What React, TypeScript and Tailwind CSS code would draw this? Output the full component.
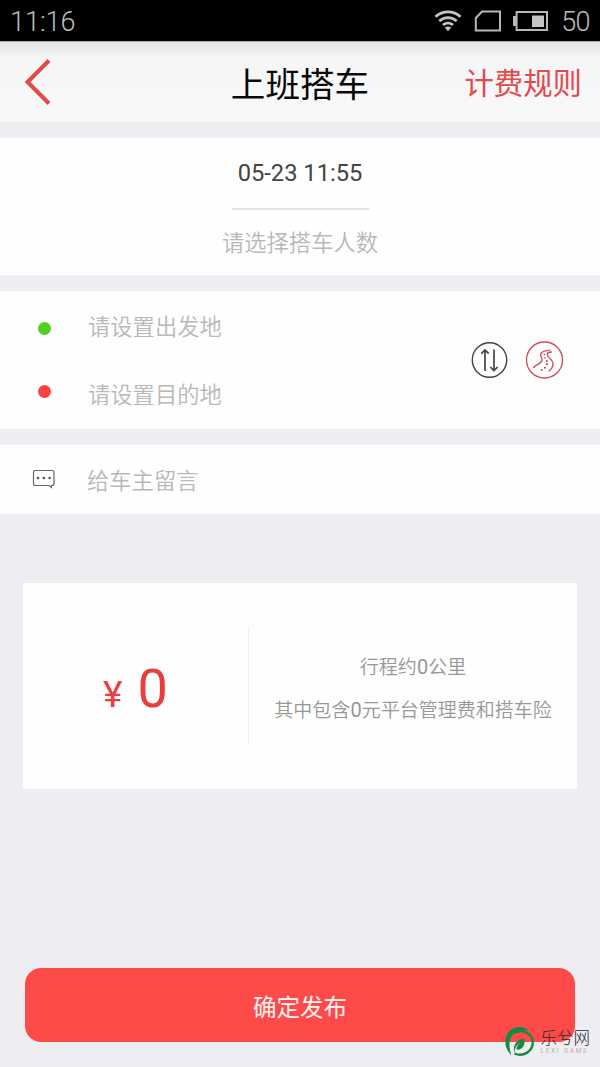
const zh = "font-['Roboto','Noto_Sans_CJK_SC',sans-serif]";

function StatusBar() {
  return (
    <div className="flex h-[41px] items-center justify-between bg-black pl-[10px] pr-[10px] text-[27px] font-light leading-none text-[#bdbdbd]">
      <span className="pt-[4px]">11:16</span>
      <div className="flex items-center">
        <svg width="28" height="24" viewBox="0 0 28 24" fill="none" stroke="#c4c4c4" strokeWidth="2.8" className="mr-[12px]">
          <path d="M1.5 7.8C8.5 1.2 19.5 1.2 26.5 7.8" />
          <path d="M5.3 12C10.3 7.4 17.7 7.4 22.7 12" />
          <path d="M9 16C12 13.4 16 13.4 19 16" />
          <path d="M10.7 18.6Q14 16.2 17.3 18.6L14 22.2Z" fill="#c4c4c4" stroke="none" />
        </svg>
        <svg width="28" height="24" viewBox="0 0 28 24" fill="none" stroke="#b8b8b8" strokeWidth="2" className="mr-[11px]">
          <path d="M8 2.500H26V21.500H1.800V9Z" />
        </svg>
        <svg width="36" height="24" viewBox="0 0 36 24" fill="none" className="mr-[12px]">
          <rect x="3.6" y="3" width="30.4" height="18" stroke="#b8b8b8" strokeWidth="2" />
          <rect x="0" y="7" width="3" height="10" fill="#b8b8b8" />
          <rect x="19" y="6.5" width="12" height="11.5" fill="#c4c4c4" />
        </svg>
        <span className="pt-[4px] text-[27px] tracking-[-0.6px]">50</span>
      </div>
    </div>
  );
}

function Header() {
  return (
    <header className="grid h-[81px] grid-cols-[1fr_auto_1fr] items-center border-t border-[#a8a8a8] bg-linear-to-b from-[#e2e2e2] via-[#f6f6f6] via-20% to-[#f8f8f8] px-[18px]">
      <svg width="28" height="46" viewBox="0 0 28 46" fill="none" stroke="#e5484a" strokeWidth="4" className="ml-[6px]">
        <path d="M25 1.5L3.5 23L25 44.5" />
      </svg>
      <h1 className="pt-[7px] text-[34.6px] font-normal leading-none text-[#0a0a0a]">上班搭车</h1>
      <span className="justify-self-end pt-[6px] text-[29.4px] font-normal leading-none text-[#e5484d]">计费规则</span>
    </header>
  );
}

function Brand() {
  return (
    <div className="absolute bottom-[9px] right-[10px] flex items-center">
      <svg width="32" height="32" viewBox="0 0 32 32" fill="none">
        <path d="M7.500 29C-1.500 22 -0.500 7 9 2.500C16 -0.500 22 1.500 24.500 4.500C17.500 2.500 10 5.500 7 11.500C4.300 17.500 5.500 24 7.500 29Z" fill="#148a42" />
        <path d="M10.500 7C19 2 28.500 8 28.800 16C29 25 19.500 31.500 10.500 27.500" stroke="#148a42" strokeWidth="2.4" />
        <path d="M10.500 27.500C8.500 19 12 13.500 20.500 12.500C21.500 19.500 18 24.500 12.500 23.500C12.500 20.500 14 18 16.500 16.500C12.500 18.500 10.500 22 10.500 27.500Z" fill="#148a42" />
      </svg>
      <div className="ml-[5px] flex flex-col pb-[1px]">
        <span className="text-[16.5px] font-light leading-[19px] text-[#222832]">乐兮网</span>
        <span className="text-[6.500px] leading-[7px] tracking-[1.700px] text-[#b3b3b6]">LEXI GAME</span>
      </div>
    </div>
  );
}

export default function App() {
  return (
    <div className={`relative flex h-[1067px] w-[600px] flex-col overflow-hidden bg-[#eeedf2] ${zh}`}>
      <StatusBar />
      <Header />

      <section className="mt-[16px] flex h-[137px] flex-col items-center bg-[#fefefe]">
        <div className="mt-[22px] text-[23.7px] leading-[26px] text-[#444]">05-23 11:55</div>
        <div className="mt-[22px] h-[2px] w-[137px] bg-[#e3e3e3]" />
        <div className="mt-[20px] text-[22.3px] font-[350] leading-[26px] text-[#b8b8b8]">请选择搭车人数</div>
      </section>

      <section className="mt-[16px] flex h-[138px] items-center justify-between bg-[#fefefe] pr-[36px]">
        <div className="flex flex-col">
          <div className="flex h-[68px] items-center">
            <span className="ml-[38px] mt-[5px] size-[13px] rounded-full bg-[#51cf22]" />
            <span className="ml-[37px] mt-[2px] text-[22.3px] font-[350] leading-[26px] text-[#b8b8b8]">请设置出发地</span>
          </div>
          <div className="flex h-[68px] items-center">
            <span className="mb-[5px] ml-[38px] size-[13px] rounded-full bg-[#fb4242]" />
            <span className="ml-[37px] mt-[2px] text-[22.3px] font-[350] leading-[26px] text-[#b8b8b8]">请设置目的地</span>
          </div>
        </div>
        <div className="flex gap-[17px]">
          <svg width="38" height="38" viewBox="0 0 38 38" fill="none" stroke="#444" strokeWidth="1.4">
            <circle cx="18.500" cy="19" r="17.2" />
            <path d="M14 30V9.5M10.3 12.6L14 9L17.7 12.6" strokeWidth="1.7" />
            <path d="M23 8.5V29M19.3 26L23 29.6L26.7 26" strokeWidth="1.7" />
          </svg>
          <svg width="38" height="38" viewBox="0 0 38 38" fill="none" stroke="#d4485a" strokeWidth="1.3" strokeLinecap="round">
            <circle cx="18.500" cy="19" r="18" />
            <path d="M7.500 26.500C10.500 23 16.500 22.500 16 18.500C15.700 16.500 13.500 14 15.500 11.800C17.500 9.700 21 10 24 9" />
            <path d="M25.500 11C21.500 11 20.500 12.500 21.500 14.500C23 17.500 27.500 19 27 23.500C26.700 26.500 25 28.500 23 30" />
            <g fill="#98505b" stroke="none">
              <circle cx="18.300" cy="13.500" r="0.800" />
              <circle cx="19" cy="17" r="0.800" />
              <circle cx="20.800" cy="20" r="1" />
              <circle cx="20.900" cy="23.300" r="1.100" />
              <circle cx="19" cy="26.700" r="1" />
              <circle cx="15.700" cy="29" r="0.900" />
            </g>
          </svg>
        </div>
      </section>

      <section className="mt-[16px] flex h-[69px] items-center bg-[#fefefe]">
        <svg width="24" height="20" viewBox="0 0 24 20" fill="none" stroke="#666" strokeWidth="1.200" className="mb-[1px] ml-[32px]">
          <path d="M3.500 1.500H20Q22 1.500 22 3.500V14.500Q22 16.500 19.500 16.500V18.500L17 16.500H3.500Q1.500 16.500 1.500 14.500V3.500Q1.500 1.500 3.500 1.500Z" />
          <g fill="#555" stroke="none">
            <circle cx="6" cy="9" r="1.300" />
            <circle cx="11.800" cy="9" r="1.300" />
            <circle cx="17.600" cy="9" r="1.300" />
          </g>
        </svg>
        <span className="ml-[31px] pt-[3px] text-[22.3px] font-[350] leading-[26px] text-[#b8b8b8]">给车主留言</span>
      </section>

      <section className="mx-[23px] mt-[69px] flex h-[206px] items-center bg-[#fefefe]">
        <div className="flex w-[225px] items-baseline justify-center pt-[11px] text-[#e5403f]">
          <span className="text-[37px] leading-[60px]">¥</span>
          <span className="ml-[15px] text-[54px] leading-[60px]">0</span>
        </div>
        <div className="h-[118px] w-px bg-[#f1f1f1]" />
        <div className="flex flex-1 flex-col items-center gap-[16px] pt-[5px] text-[19px] font-[350] leading-[26px] text-[#979797]">
          <span>行程约<span className="text-[20px] font-normal">0</span>公里</span>
          <span>其中包含<span className="text-[20px] font-normal">0</span>元平台管理费和搭车险</span>
        </div>
      </section>

      <button className="mx-[25px] mt-[179px] flex h-[74px] items-center justify-center rounded-[16px] bg-[#fe4b4a] pt-[7px] text-[23.5px] leading-none text-[#fff4f0]">
        确定发布
      </button>
      <Brand />
    </div>
  );
}
